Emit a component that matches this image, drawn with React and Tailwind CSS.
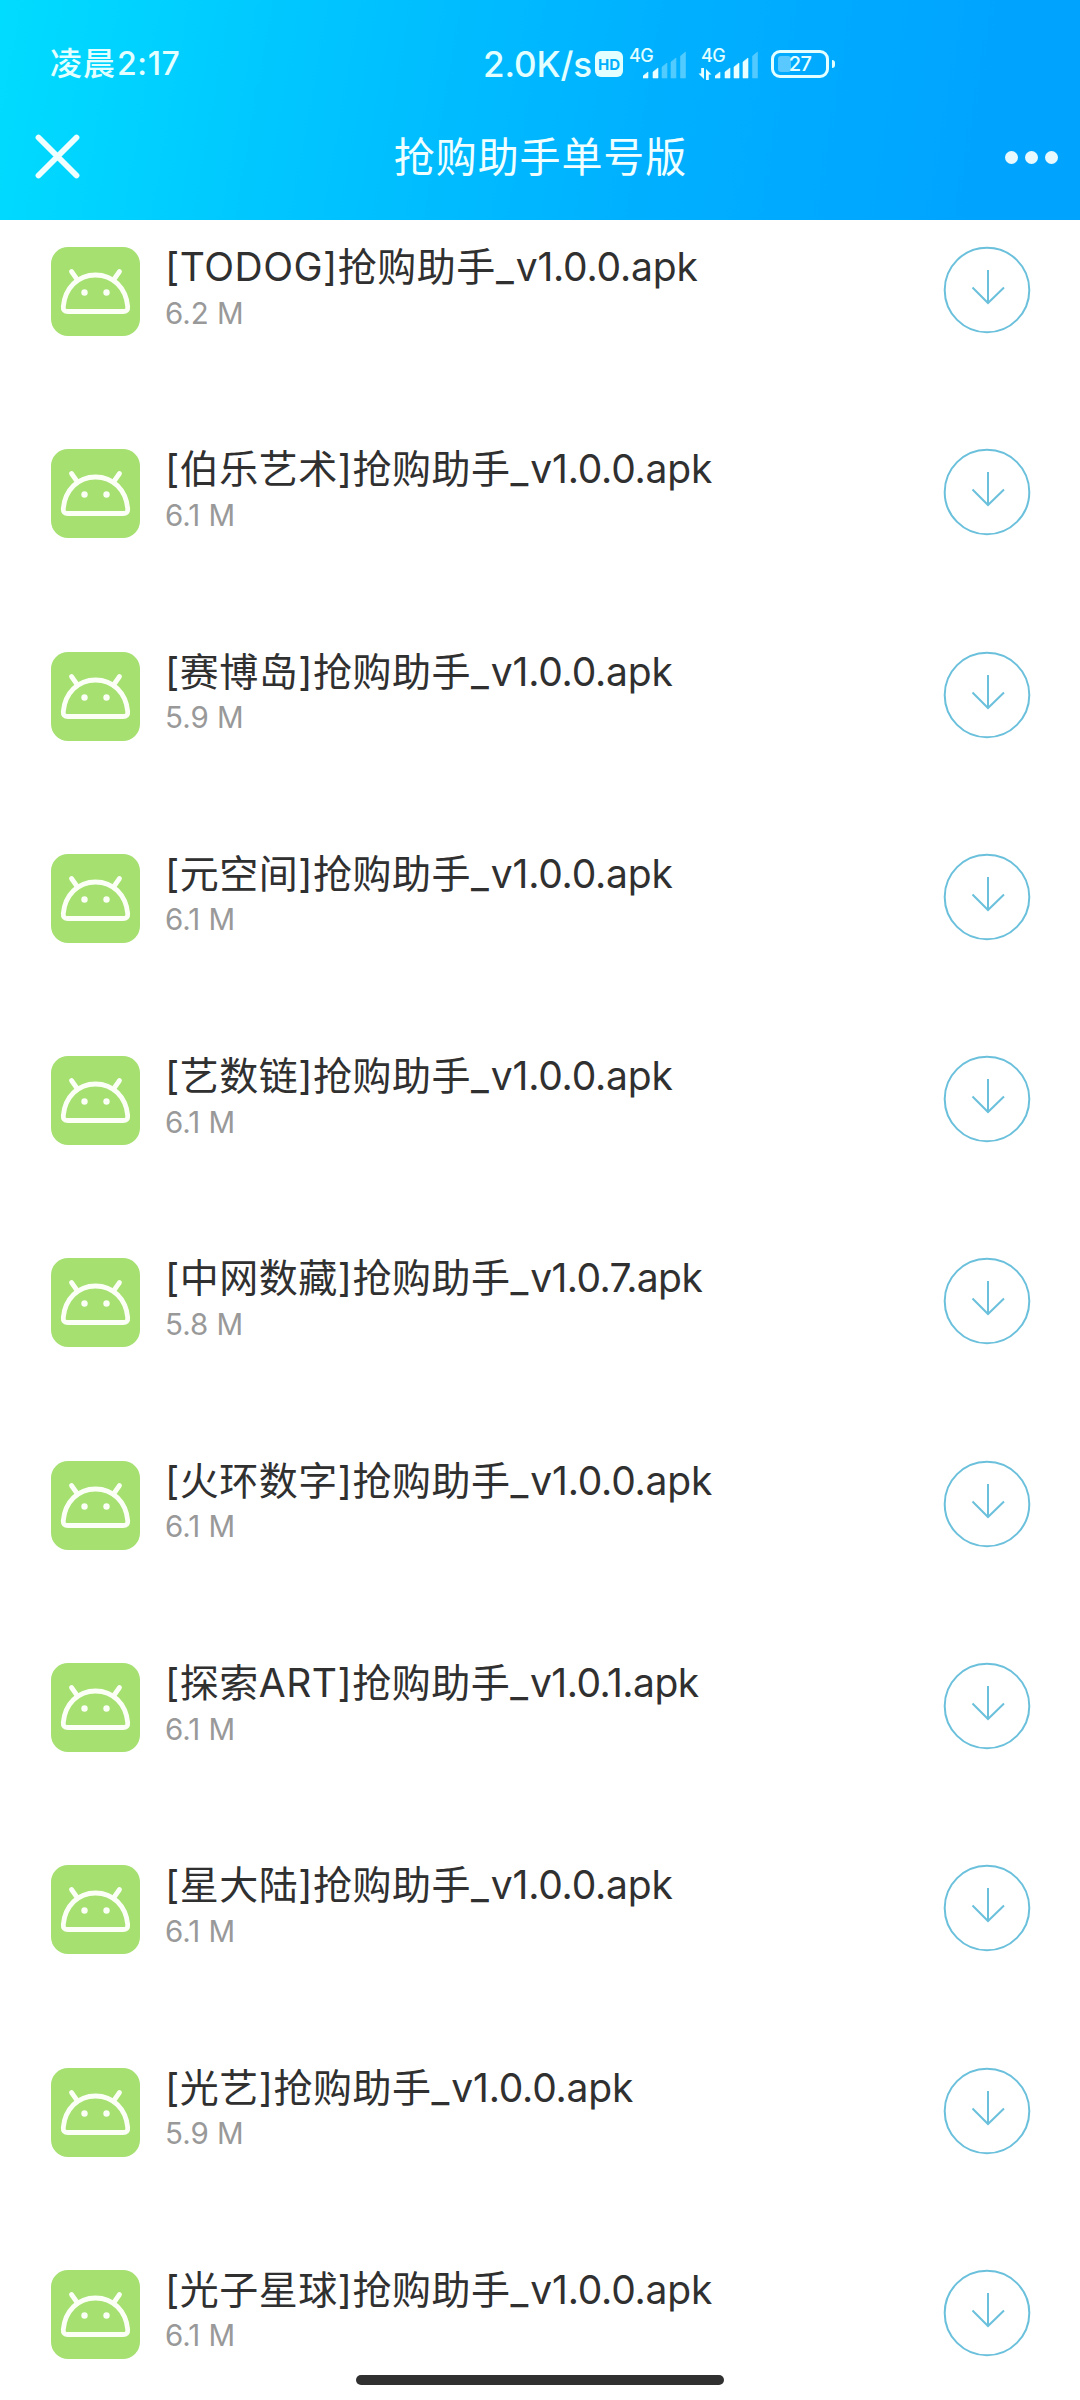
const files = [
  ['[TODOG]', 'v1.0.0.apk', '6.2 M'],
  ['[伯乐艺术]', 'v1.0.0.apk', '6.1 M'],
  ['[赛博岛]', 'v1.0.0.apk', '5.9 M'],
  ['[元空间]', 'v1.0.0.apk', '6.1 M'],
  ['[艺数链]', 'v1.0.0.apk', '6.1 M'],
  ['[中网数藏]', 'v1.0.7.apk', '5.8 M', 'tracking-[-0.6px]'],
  ['[火环数字]', 'v1.0.0.apk', '6.1 M'],
  ['[探索ART]', 'v1.0.1.apk', '6.1 M', 'tracking-[-0.5px]'],
  ['[星大陆]', 'v1.0.0.apk', '6.1 M'],
  ['[光艺]', 'v1.0.0.apk', '5.9 M'],
  ['[光子星球]', 'v1.0.0.apk', '6.1 M'],
];

function AndroidIcon() {
  return (
    <svg viewBox="0 0 89 89" className="size-[89px] shrink-0" fill="none">
      <rect width="89" height="89" rx="17" fill="#a5e070" />
      <g stroke="#fbfff6" strokeWidth="4.8" strokeLinecap="round" strokeLinejoin="round">
        <path d="M17 64.500C13.500 64.500 12 63 12.300 59.500C14 41 27 28 44.500 28C62 28 75 41 76.700 59.500C77 63 75.500 64.500 72 64.500Z" />
        <path d="M20.500 24.500L26.500 33M68.500 24.500L62.500 33" />
      </g>
      <circle cx="33.500" cy="45.500" r="3.200" fill="#fbfff6" />
      <circle cx="55.500" cy="45.500" r="3.200" fill="#fbfff6" />
    </svg>
  );
}

function DownloadIcon() {
  return (
    <svg viewBox="0 0 88 88" className="-mr-px -mt-px size-[88px]" fill="none" stroke="#6bc0dc" strokeWidth="2">
      <circle cx="44" cy="44" r="42.300" />
      <path d="M45 24V57M29.500 41.500L45 57L61 41.500" />
    </svg>
  );
}

function Signal({ full }) {
  const bars = [[0, 20, 6], [10, 16, 10], [19, 11, 15], [28, 6, 20], [37.5, 0, 26]];
  return (
    <svg viewBox="0 0 44 28" className="h-[28px] w-[44px]" fill="#eaffff">
      {bars.map(([x, y, h], i) => (
        <path key={x} d={`M${x} ${y + 5}L${x + 5} ${y + 1}V${y + h + 1}H${x}Z`} stroke="#eaffff" strokeWidth=".6" opacity={i < full ? 1 : 0.35} />
      ))}
    </svg>
  );
}

function StatusBar() {
  return (
    <div className="flex h-[94px] items-start text-[#e4ffff]">
      <div className="ml-[50px] mt-[40px] flex w-[433px] whitespace-nowrap text-[32px] font-medium leading-[48px]">
        <span className="tracking-[1px]">凌晨</span><span className="ml-px tracking-[0.6px]">2:17</span>
      </div>
      <div className="mt-[40px] w-[112px] whitespace-nowrap text-[35px] font-medium leading-[48px] tracking-[-0.1px]">2.0K/s</div>
      <div className="mt-[51px] flex h-[26px] w-[28px] items-center justify-center rounded-[6px] bg-[#e4ffff] text-[15px] font-bold leading-none text-[#00aefe]">HD</div>
      <div className="relative ml-[6px] mt-[51px] h-[30px] w-[58px]">
        <span className="absolute -top-[5px] left-0 text-[18px] font-medium leading-[20px] tracking-[-0.5px]">4G</span>
        <div className="absolute left-[14px] top-0"><Signal full={2} /></div>
      </div>
      <div className="relative ml-[13px] mt-[51px] h-[30px] w-[58px]">
        <span className="absolute -top-[5px] left-[1px] text-[18px] font-medium leading-[20px] tracking-[-0.5px]">4G</span>
        <svg viewBox="0 0 14 12" className="absolute -left-[2px] top-[17px] h-[12px] w-[14px]" fill="#eaffff">
          <path d="M3.200 0H6V11L0.500 5.500H3.200ZM8 12V1L13.500 6.500H10.800V12Z" />
        </svg>
        <div className="absolute left-[15px] top-0"><Signal full={4} /></div>
      </div>
      <div className="relative ml-[13px] mt-[50px] flex h-[28px] w-[58px] items-center justify-center rounded-[9px] border-[3px] border-[#e4ffff]">
        <span className="absolute left-[4px] top-[3px] h-[16px] w-[13px] rounded-[3px] bg-white/35" />
        <span className="text-[20px] font-medium leading-none tracking-[-0.5px]">27</span>
      </div>
      <div className="ml-[3px] mt-[60px] h-[8px] w-[3px] rounded-r-sm bg-[#e4ffff]" />
    </div>
  );
}

function TitleBar() {
  return (
    <div className="flex h-[126px] items-start justify-between pl-[35px] pr-[22px]">
      <svg viewBox="0 0 46 46" className="mt-[40px] size-[46px]" stroke="#f0ffff" strokeWidth="5.8" strokeLinecap="round">
        <path d="M3.500 3.500L41.500 41.500M41.500 3.500L3.500 41.500" />
      </svg>
      <h1 className="-ml-[5px] mt-[34px] text-[41px] font-normal leading-[58px] tracking-[0.9px] text-[#f0ffff]">抢购助手单号版</h1>
      <div className="mt-[57px] flex gap-[7px]">
        <i className="size-[13px] rounded-full bg-[#e8faff]" />
        <i className="size-[13px] rounded-full bg-[#e8faff]" />
        <i className="size-[13px] rounded-full bg-[#e8faff]" />
      </div>
    </div>
  );
}

function FileRow({ name, suffix, size, tracking = 'tracking-[-0.2px]' }) {
  return (
    <li className="flex h-[202.300px] items-start pl-[51px] pr-[50px]">
      <AndroidIcon />
      <div className="ml-[25px] -mt-[7px] flex-1 whitespace-nowrap">
        <div className="flex text-[39px] leading-[54px] text-[#303030]">
          <span className="tracking-[0.5px]">{name}抢购助手</span>
          <span className="mr-[2px]">_</span>
          <span className={tracking}>{suffix}</span>
        </div>
        <div className="mt-[2.500px] text-[29.500px] leading-[32px] text-[#999999]">{size}</div>
      </div>
      <DownloadIcon />
    </li>
  );
}

export default function App() {
  return (
    <div className="relative h-[2400px] w-[1080px] overflow-hidden bg-white font-[Inter,'Noto_Sans_CJK_SC',sans-serif]">
      <header className="h-[220px] bg-[linear-gradient(100deg,#00dcff_0%,#00c4ff_30%,#00b0ff_60%,#00a4ff_90%,#00a4ff_100%)]">
        <StatusBar />
        <TitleBar />
      </header>
      <ul className="pt-[27px]">
        {files.map(([name, suffix, size, tracking]) => (
          <FileRow key={name} name={name} suffix={suffix} size={size} tracking={tracking} />
        ))}
      </ul>
      <div className="absolute bottom-[15px] left-[356px] h-[10px] w-[368px] rounded-full bg-[#303030]" />
    </div>
  );
}
